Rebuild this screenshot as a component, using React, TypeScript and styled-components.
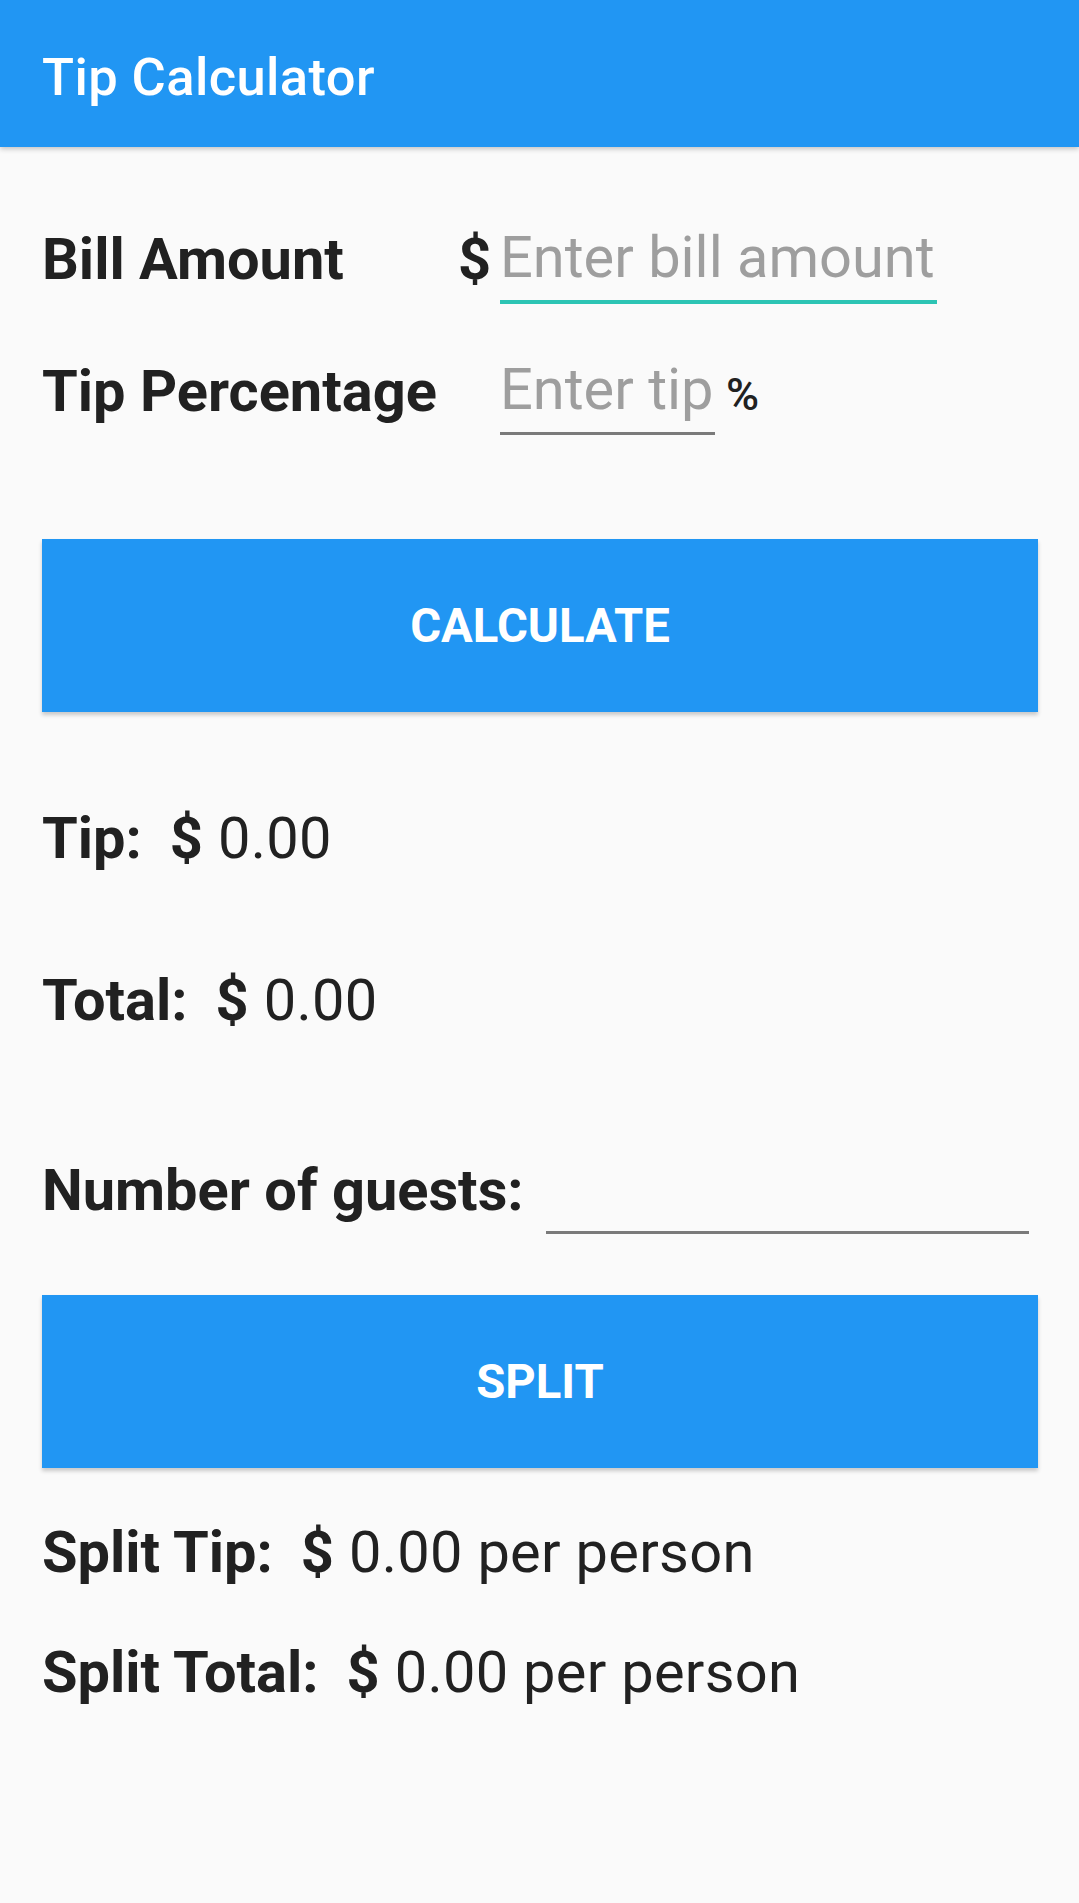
import React, { useState } from "react";
import styled, { createGlobalStyle } from "styled-components";

const GlobalStyle = createGlobalStyle`
  body {
    margin: 0;
    background: #fafafa;
    font-family: Roboto, "Liberation Sans", sans-serif;
    color: #212121;
  }
`;

const Screen = styled.div`
  min-height: 1903px;
  background: #fafafa;
`;

const AppBar = styled.header`
  box-sizing: border-box;
  height: 147px;
  padding: 7px 42px 0;
  background: #2196f3;
  box-shadow: 0 2px 5px rgba(0, 0, 0, 0.22);
`;

const Title = styled.h1`
  margin: 0;
  font-size: 52.5px;
  font-weight: 500;
  letter-spacing: 0.4px;
  line-height: 140px;
  color: #ffffff;
`;

const Content = styled.main`
  padding: 0 41px 0 42px;
`;

const FormGrid = styled.div`
  display: grid;
  grid-template-columns: 416px 42px auto;
  row-gap: 53px;
  align-items: start;
  margin-top: 78px;
`;

const Label = styled.span`
  font-size: 57.75px;
  font-weight: 700;
  line-height: 68px;
  white-space: nowrap;
`;

const Symbol = styled.span<{ $small?: boolean }>`
  font-size: ${(p) => (p.$small ? "45px" : "57.75px")};
  font-weight: ${(p) => (p.$small ? 500 : 700)};
  line-height: 68px;
  padding-top: ${(p) => (p.$small ? "4px" : "0")};
  margin-left: ${(p) => (p.$small ? "11px" : "0")};
`;

const FieldWrap = styled.div`
  display: flex;
  align-items: flex-start;
`;

const Field = styled.input<{ $focused?: boolean; $width?: string }>`
  box-sizing: content-box;
  width: ${(p) => p.$width || "auto"};
  height: 65px;
  margin: 0;
  padding: 0 0 10px;
  border: none;
  border-bottom: ${(p) =>
    p.$focused ? "4px solid #2cc4b4" : "3px solid #7a7a7a"};
  border-radius: 0;
  background: transparent;
  font-family: Roboto, "Liberation Sans", sans-serif;
  font-size: 57.75px;
  line-height: 65px;
  color: #212121;
  outline: none;

  &::placeholder {
    color: #9e9e9e;
  }
`;

const ActionButton = styled.button<{ $top: number }>`
  display: block;
  width: 100%;
  height: 173px;
  margin-top: ${(p) => p.$top}px;
  border: none;
  border-radius: 0;
  background: #2196f3;
  color: #ffffff;
  font-family: Roboto, "Liberation Sans", sans-serif;
  font-size: 47.25px;
  font-weight: 700;
  text-transform: uppercase;
  box-shadow: 0 3px 4px rgba(0, 0, 0, 0.2);
  cursor: pointer;
`;

const ResultLine = styled.div<{ $top: number }>`
  margin-top: ${(p) => p.$top}px;
  font-size: 57.75px;
  line-height: 68px;
  white-space: nowrap;
`;

const Strong = styled.span<{ $gap?: number }>`
  font-weight: 700;
  margin-left: ${(p) => p.$gap || 0}px;
`;

const Amount = styled.span`
  font-weight: 400;
  margin-left: 15px;
  letter-spacing: 0.3px;
`;

const GuestsRow = styled.div`
  display: flex;
  align-items: flex-start;
  margin-top: 122px;
`;

const GuestField = styled(Field)`
  flex: 1;
  min-width: 0;
  margin-left: 22px;
  margin-right: 9px;
`;

function App() {
  const [bill, setBill] = useState("");
  const [tip, setTip] = useState("");
  const [guests, setGuests] = useState("");
  const [tipAmount, setTipAmount] = useState(0);
  const [total, setTotal] = useState(0);
  const [splitTip, setSplitTip] = useState(0);
  const [splitTotal, setSplitTotal] = useState(0);

  const calculate = () => {
    const b = parseFloat(bill) || 0;
    const t = ((parseFloat(tip) || 0) / 100) * b;
    setTipAmount(t);
    setTotal(b + t);
  };

  const split = () => {
    const n = parseInt(guests, 10) || 0;
    if (n <= 0) return;
    setSplitTip(tipAmount / n);
    setSplitTotal(total / n);
  };

  return (
    <Screen>
      <GlobalStyle />
      <AppBar>
        <Title>Tip Calculator</Title>
      </AppBar>
      <Content>
        <FormGrid>
          <Label>Bill Amount</Label>
          <Symbol>$</Symbol>
          <FieldWrap>
            <Field
              $focused
              $width="437px"
              placeholder="Enter bill amount"
              value={bill}
              onChange={(e) => setBill(e.target.value)}
            />
          </FieldWrap>

          <Label>Tip Percentage</Label>
          <span />
          <FieldWrap>
            <Field
              $width="215px"
              placeholder="Enter tip"
              value={tip}
              onChange={(e) => setTip(e.target.value)}
            />
            <Symbol $small>%</Symbol>
          </FieldWrap>
        </FormGrid>

        <ActionButton $top={104} onClick={calculate}>
          Calculate
        </ActionButton>

        <ResultLine $top={92}>
          <Strong>Tip:</Strong>
          <Strong $gap={28}>$</Strong>
          <Amount>{tipAmount.toFixed(2)}</Amount>
        </ResultLine>
        <ResultLine $top={94}>
          <Strong>Total:</Strong>
          <Strong $gap={28}>$</Strong>
          <Amount>{total.toFixed(2)}</Amount>
        </ResultLine>

        <GuestsRow>
          <Label>Number of guests:</Label>
          <GuestField
            value={guests}
            onChange={(e) => setGuests(e.target.value)}
          />
        </GuestsRow>

        <ActionButton $top={61} onClick={split}>
          Split
        </ActionButton>

        <ResultLine $top={50}>
          <Strong>Split Tip:</Strong>
          <Strong $gap={28}>$</Strong>
          <Amount>{splitTip.toFixed(2)} per person</Amount>
        </ResultLine>
        <ResultLine $top={52}>
          <Strong>Split Total:</Strong>
          <Strong $gap={28}>$</Strong>
          <Amount>{splitTotal.toFixed(2)} per person</Amount>
        </ResultLine>
      </Content>
    </Screen>
  );
}

export default App;
